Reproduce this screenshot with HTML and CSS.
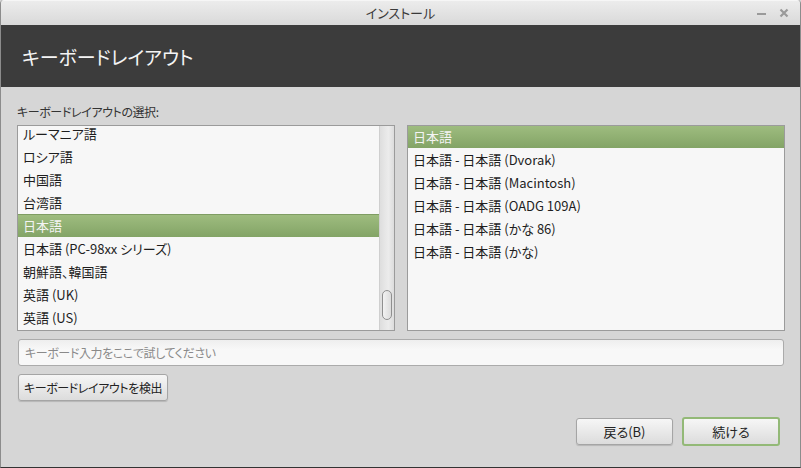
FILE: index.html
```html
<!DOCTYPE html>
<html lang="ja">
<head>
<meta charset="utf-8">
<title>インストール</title>
<link rel="stylesheet" href="styles.css">
</head>
<body>
<div class="window">
  <div class="titlebar">
    <span class="title">インストール</span>
    <div class="controls">
      <span class="ctl min"></span>
      <svg class="ctl close" width="10" height="10" viewBox="0 0 10 10"><path d="M1.5 1.5 L8.5 8.5 M8.5 1.5 L1.5 8.5" stroke="#9a9a9a" stroke-width="2.2" fill="none"/></svg>
    </div>
  </div>
  <div class="header"><h1>キーボードレイアウト</h1></div>
  <div class="content">
    <div class="label">キーボードレイアウトの選択:</div>
    <div class="lists">
      <div class="list left">
        <div class="rows scrolled">
          <div class="row">ルーマニア語</div>
          <div class="row">ロシア語</div>
          <div class="row">中国語</div>
          <div class="row">台湾語</div>
          <div class="row sel">日本語</div>
          <div class="row">日本語 (PC-98xx シリーズ)</div>
          <div class="row">朝鮮語、韓国語</div>
          <div class="row">英語 (UK)</div>
          <div class="row">英語 (US)</div>
        </div>
        <div class="scrollbar"><div class="thumb"></div></div>
      </div>
      <div class="list right">
        <div class="rows">
          <div class="row sel">日本語</div>
          <div class="row">日本語 - 日本語 (Dvorak)</div>
          <div class="row">日本語 - 日本語 (Macintosh)</div>
          <div class="row">日本語 - 日本語 (OADG 109A)</div>
          <div class="row">日本語 - 日本語 (かな 86)</div>
          <div class="row">日本語 - 日本語 (かな)</div>
        </div>
      </div>
    </div>
    <input class="test" type="text" placeholder="キーボード入力をここで試してください">
    <div class="detect-row"><button class="btn detect">キーボードレイアウトを検出</button></div>
    <div class="actions">
      <button class="btn back">戻る(B)</button>
      <button class="btn next">続ける</button>
    </div>
  </div>
</div>
</body>
</html>
```

FILE: styles.css
```css
* { box-sizing: border-box; }
html, body { margin: 0; padding: 0; }
body {
  width: 801px;
  height: 468px;
  overflow: hidden;
  font-family: "Noto Sans CJK JP", "Noto Sans", sans-serif;
  font-feature-settings: "palt";
  font-size: 13px;
  color: #222;
  background: #d6d6d6;
}
.window {
  width: 801px;
  height: 468px;
  display: flex;
  flex-direction: column;
  border-left: 1px solid #8c8c8c;
  border-right: 1px solid #8c8c8c;
  border-bottom: 1px solid #333;
  border-top-left-radius: 4px;
  border-top-right-radius: 4px;
  background: #d6d6d6;
  overflow: hidden;
}
.titlebar {
  height: 25px;
  flex: none;
  display: flex;
  align-items: center;
  justify-content: center;
  position: relative;
  background: linear-gradient(#ececec, #d9d9d9);
  border-top: 1px solid #f6f6f6;
}
.title { font-size: 13px; color: #3a3a3a; line-height: 1; margin-top: -1px; }
.controls {
  position: absolute;
  right: 11px;
  top: 0;
  height: 24px;
  display: flex;
  align-items: center;
  gap: 13px;
}
.ctl.min {
  width: 9px;
  height: 2px;
  background: #9a9a9a;
  margin-top: 2px;
}
.header {
  height: 62px;
  flex: none;
  background: #3c3c3c;
  display: flex;
  align-items: center;
  padding-left: 21px;
}
.header h1 {
  margin: 0;
  font-weight: 400;
  font-size: 19px;
  color: #f4f4f4;
  margin-top: 1px;
}
.content {
  flex: 1;
  display: flex;
  flex-direction: column;
  padding: 0 15px 0 16px;
}
.label {
  height: 38px;
  display: flex;
  align-items: flex-end;
  padding-bottom: 5px;
  font-size: 12px;
  letter-spacing: -0.4px;
  color: #333;
}
.lists {
  display: flex;
  gap: 12px;
  height: 206px;
}
.list {
  width: 378px;
  height: 206px;
  border: 1px solid #9b9b9b;
  background: #f7f7f7;
  position: relative;
  overflow: hidden;
  display: flex;
}
.rows { flex: 1; }
.rows.scrolled { margin-top: -4px; }
.row {
  height: 23px;
  line-height: 23px;
  padding-left: 5px;
  white-space: nowrap;
  color: #1e1e1e;
}
.row.sel {
  background: linear-gradient(#9ebc7f, #83a466);
  border-top: 1px solid #7f9d63;
  color: #f4f4f4;
  line-height: 21px;
}
.right .row.sel { border-top: none; height: 22px; line-height: 22px; }
.scrollbar {
  width: 15px;
  flex: none;
  border-left: 1px solid #cfcfcf;
  background: linear-gradient(90deg, #dedede, #ececec 60%, #dcdcdc);
  display: flex;
  flex-direction: column;
  justify-content: flex-end;
  align-items: center;
  padding-bottom: 10px;
}
.thumb {
  width: 10px;
  height: 30px;
  border: 1px solid #8f8f8f;
  border-radius: 5px;
  background: linear-gradient(90deg, #f2f2f2, #dcdcdc);
}
.test {
  margin-top: 8px;
  margin-left: 1px;
  width: 766px;
  height: 27px;
  border: 1px solid #ababab;
  border-radius: 3px;
  background: linear-gradient(#eeeeee, #f8f8f8 40%);
  font-family: inherit;
  font-feature-settings: "palt";
  font-size: 12px;
  letter-spacing: -0.4px;
  padding: 0 6px;
  color: #222;
  outline: none;
}
.test::placeholder { color: #8a8a8a; }
.detect-row { margin-top: 8px; margin-left: 1px; display: flex; }
.btn {
  font-family: inherit;
  font-feature-settings: "palt";
  font-size: 13px;
  color: #222;
  height: 27px;
  border: 1px solid #a5a5a5;
  border-radius: 3px;
  background: linear-gradient(#f6f6f6, #dcdcdc);
  box-shadow: 0 1px 1px rgba(0,0,0,0.15);
  padding: 0 4px;
  white-space: nowrap;
  cursor: default;
}
.detect { width: 150px; font-size: 12px; letter-spacing: -0.4px; }
.actions {
  margin-top: 16px;
  display: flex;
  justify-content: flex-end;
  gap: 9px;
  padding-right: 5px;
}
.back { width: 97px; margin-top: 1px; }
.next {
  width: 98px;
  height: 29px;
  border: 2px solid #93b977;
  box-shadow: none;
}
```
